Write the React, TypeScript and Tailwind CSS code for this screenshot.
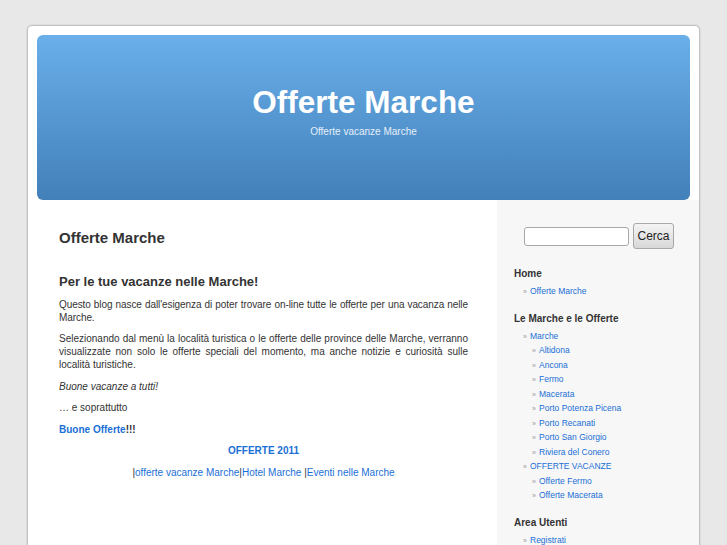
import React from "react";

const font = { fontFamily: '"Liberation Sans", Arial, sans-serif' };

function SideLink({ children, level = 1 }: { children: React.ReactNode; level?: number }) {
  return (
    <li className={`flex items-center h-[14.5px] ${level === 2 ? "pl-[18px]" : "pl-[9px]"}`}>
      <span className="text-[7px] text-[#9a9a9a] w-[7px] leading-none">»</span>
      <a className="text-[8.5px] text-[#1a6fd6] leading-none">{children}</a>
    </li>
  );
}

export default function App() {
  return (
    <div className="min-h-[545px] h-[545px] overflow-hidden bg-[#e8e8e8]" style={font}>
      <div className="ml-[27px] mt-[25px] w-[673px] h-[560px] bg-white border border-[#c2c2c2] rounded-t-[5px] shadow-[0_0_2px_rgba(0,0,0,0.15)] overflow-hidden">
        <header className="mx-[9px] mt-[9px] h-[165px] rounded-[6px] bg-gradient-to-b from-[#6aafea] to-[#4280b9] flex flex-col items-center">
          <h1 className="mt-[49px] text-[31.5px] leading-[36px] font-bold text-white">Offerte Marche</h1>
          <p className="mt-[5.5px] text-[10px] leading-[12px] text-[#e6eff9]">Offerte vacanze Marche</p>
        </header>
        <div className="flex">
          <main className="w-[469px] pl-[31px] pr-[29px] pt-[29px] text-[#333]">
            <h2 className="text-[15px] leading-[18px] font-bold text-[#333]">Offerte Marche</h2>
            <h3 className="mt-[27px] text-[13px] leading-[16px] font-bold text-[#333]">Per le tue vacanze nelle Marche!</h3>
            <div className="mt-[7.5px] text-[10px] leading-[13px] text-[#333]">
              <p className="text-justify mb-[8.5px] tracking-[-0.08px]">
                Questo blog nasce dall'esigenza di poter trovare on-line tutte le offerte per una vacanza nelle Marche.
              </p>
              <p className="text-justify mb-[8.5px]">
                Selezionando dal menù la località turistica o le offerte delle province delle Marche, verranno visualizzate non solo le offerte speciali del momento, ma anche notizie e curiosità sulle località turistiche.
              </p>
              <p className="italic mb-[8.5px]">Buone vacanze a tutti!</p>
              <p className="mb-[8.5px]">… e soprattutto</p>
              <p className="mb-[8.5px] font-bold">
                <a className="text-[#1a6fd6]">Buone Offerte</a>!!!
              </p>
              <p className="mb-[8.5px] text-center font-bold">
                <a className="text-[#1a6fd6]">OFFERTE 2011</a>
              </p>
              <p className="mb-[8.5px] text-center">
                |<a className="text-[#1a6fd6]">offerte vacanze Marche</a>|<a className="text-[#1a6fd6]">Hotel Marche</a> |<a className="text-[#1a6fd6]">Eventi nelle Marche</a>
              </p>
            </div>
          </main>
          <aside className="w-[202px] h-[360px] bg-[#f7f7f7] pt-[23px] pl-[17px]">
            <div className="flex items-center gap-[4px] ml-[10px]">
              <input className="w-[105px] h-[19px] bg-white border border-[#a8a8a8] rounded-[3px] outline-none" />
              <button className="w-[41px] h-[26px] text-[12px] text-[#222] border border-[#a8a8a8] rounded-[3px] bg-gradient-to-b from-[#f4f4f4] to-[#d8d8d8]">
                Cerca
              </button>
            </div>
            <h4 className="mt-[17.5px] text-[10px] leading-[13px] font-bold text-[#333]">Home</h4>
            <ul className="mt-[4.25px]">
              <SideLink>Offerte Marche</SideLink>
            </ul>
            <h4 className="mt-[13.25px] text-[10px] leading-[13px] font-bold text-[#333]">Le Marche e le Offerte</h4>
            <ul className="mt-[4.25px]">
              <SideLink>Marche</SideLink>
              <SideLink level={2}>Altidona</SideLink>
              <SideLink level={2}>Ancona</SideLink>
              <SideLink level={2}>Fermo</SideLink>
              <SideLink level={2}>Macerata</SideLink>
              <SideLink level={2}>Porto Potenza Picena</SideLink>
              <SideLink level={2}>Porto Recanati</SideLink>
              <SideLink level={2}>Porto San Giorgio</SideLink>
              <SideLink level={2}>Riviera del Conero</SideLink>
              <SideLink>OFFERTE VACANZE</SideLink>
              <SideLink level={2}>Offerte Fermo</SideLink>
              <SideLink level={2}>Offerte Macerata</SideLink>
            </ul>
            <h4 className="mt-[13.25px] text-[10px] leading-[13px] font-bold text-[#333]">Area Utenti</h4>
            <ul className="mt-[4.25px]">
              <SideLink>Registrati</SideLink>
            </ul>
          </aside>
        </div>
      </div>
    </div>
  );
}
